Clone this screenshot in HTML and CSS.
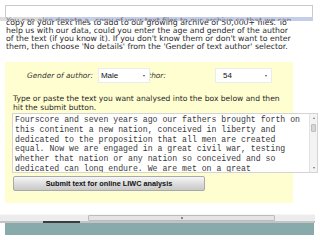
FILE: index.html
```html
<!DOCTYPE html>
<html lang="en">
<head>
  <meta charset="UTF-8">
  <title>Analyse your text</title>
  <link rel="stylesheet" href="styles.css">
</head>
<body>
  <div class="search-box"></div>
  <div class="cut-line"><span>You can also donate a</span><span class="sel">copy of your text files to our archive so that we can</span></div>

  <div class="intro">
    <p>copy of your text files to add to our growing archive of 50,000+ files. To<br>
    help us with our data, could you enter the age and gender of the author<br>
    of the text (if you know it). If you don't know them or don't want to enter<br>
    them, then choose 'No details' from the 'Gender of text author' selector.</p>
  </div>

  <form class="panel" onsubmit="return false">
    <div class="author-row">
      <span class="label">Gender of author:</span>
      <div class="select select-gender">Male<i class="arrow"></i></div>
      <span class="label label-age">Age of author:</span>
      <div class="select select-age">54<i class="arrow"></i></div>
    </div>

    <p class="hint">Type or paste the text you want analysed into the box below and then<br>hit the submit button.</p>

    <div class="textbox">
      <div class="textbox-text">Fourscore and seven years ago our fathers brought forth on<br>this continent a new nation, conceived in liberty and<br>dedicated to the proposition that all men are created<br>equal. Now we are engaged in a great civil war, testing<br>whether that nation or any nation so conceived and so<br>dedicated can long endure. We are met on a great</div>
      <div class="vscroll">
        <span class="up"></span>
        <span class="thumb"></span>
        <span class="down"></span>
      </div>
    </div>

    <button class="submit" type="submit">Submit text for online LIWC analysis</button>
  </form>

  <div class="hscroll"><div class="hthumb"><span class="grip"></span></div></div>
  <div class="hline"></div>
  <div class="footer-bar"></div>
</body>
</html>
```

FILE: styles.css
```css
* {
  margin: 0;
  padding: 0;
  box-sizing: border-box;
}

html,
body {
  width: 320px;
  height: 240px;
  overflow: hidden;
  background: #fff;
}

body {
  font-family: "DejaVu Sans", Verdana, sans-serif;
  font-size: 7.6px;
  color: #2a2a2a;
}

.search-box {
  height: 12px;
  margin: 5px 7px 0 5px;
  border: 1px solid #cacaca;
  border-bottom: none;
  background: #fff;
}

/* bottom of a line cut off by the box above */
.cut-line {
  height: 4px;
  width: 313px;
  overflow: hidden;
  white-space: nowrap;
  background: linear-gradient(to right, #dcdcdc 0 45px, #c6cde8 45px);
  line-height: 8px;
  color: #6d6f7a;
}

.cut-line span {
  display: inline-block;
  margin-top: -5px;
  padding-left: 6px;
}

.intro {
  height: 30px;
  overflow: hidden;
}

.intro p {
  margin-top: -2px;
  padding-left: 6px;
  font-size: 7.8px;
  line-height: 8px;
  white-space: nowrap;
}

.panel {
  width: 288px;
  margin: 11px 0 0 5px;
  padding: 6px 0 12px;
  background: #fffed0;
}

.author-row {
  display: flex;
  align-items: center;
  height: 15px;
  padding: 0 21px 0 22px;
}

.label {
  font-style: italic;
  font-size: 7.4px;
  color: #333;
  white-space: nowrap;
}

.label-age {
  margin-left: -37px;
}

.select {
  position: relative;
  z-index: 1;
  display: flex;
  align-items: center;
  height: 15px;
  padding-left: 2px;
  background: #fff;
  border: 1px solid #ececec;
  font-family: "Liberation Sans", Arial, sans-serif;
  font-size: 8px;
  color: #111;
}

.select-gender {
  width: 52px;
  margin-left: 5px;
}

.select-age {
  width: 57px;
  margin-left: auto;
  padding-left: 7px;
}

.arrow {
  margin-left: auto;
  margin-right: 4px;
  border-left: 1.5px solid transparent;
  border-right: 1.5px solid transparent;
  border-top: 2px solid #555;
}

.hint {
  margin: 11px 0 0 8px;
  line-height: 9px;
  white-space: nowrap;
}

.textbox {
  display: flex;
  width: 306px;
  height: 60px;
  margin: 1px 0 0 7px;
  background: #fff;
  border: 1px solid #d4d4d4;
}

.textbox-text {
  flex: 1;
  overflow: hidden;
  padding: 1px 0 0 2px;
  font-family: "Liberation Mono", "Courier New", monospace;
  font-size: 8.2px;
  line-height: 9.8px;
  color: #3a3a3a;
  white-space: nowrap;
}

.vscroll {
  display: flex;
  flex-direction: column;
  align-items: center;
  width: 8px;
  background: #f3f3f3;
  border-left: 1px solid #e2e2e2;
}

.vscroll .up,
.vscroll .down {
  width: 0;
  height: 0;
  border-left: 1.5px solid transparent;
  border-right: 1.5px solid transparent;
}

.vscroll .up {
  margin-top: 3px;
  border-bottom: 2px solid #777;
}

.vscroll .thumb {
  width: 5px;
  height: 8px;
  margin-top: 5px;
  background: #d6d6d6;
  border: 1px solid #bdbdbd;
  border-radius: 1px;
}

.vscroll .down {
  margin-top: auto;
  margin-bottom: 3px;
  border-top: 2px solid #777;
}

.submit {
  display: block;
  width: 192px;
  height: 15px;
  margin: 3px 0 0 8px;
  border: 1px solid #a9a9a9;
  border-radius: 2px;
  background: linear-gradient(#f7f7f7, #d9d9d9 60%, #c9c9c9);
  font-family: "Liberation Sans", Arial, sans-serif;
  font-size: 7.3px;
  font-weight: bold;
  color: #111;
}

.hscroll {
  width: 315px;
  height: 7px;
  margin-top: 11px;
  padding-left: 88px;
  background: #ececec;
  border-top: 1px solid #f6f6f6;
}

.hthumb {
  display: flex;
  justify-content: center;
  align-items: center;
  width: 187px;
  height: 6px;
  background: #e4e4e4;
  border: 1px solid #bcbcbc;
  border-radius: 1px;
}

.grip {
  width: 2px;
  height: 2px;
  background: #888;
}

.hline {
  width: 315px;
  height: 2px;
  background: linear-gradient(to right, #c4c4c4 0 43px, #3c3c3c 43px 80px, #c4c4c4 80px);
}

.footer-bar {
  height: 12px;
  margin: 0 6px 0 5px;
  background: #88aaaa;
}
```
